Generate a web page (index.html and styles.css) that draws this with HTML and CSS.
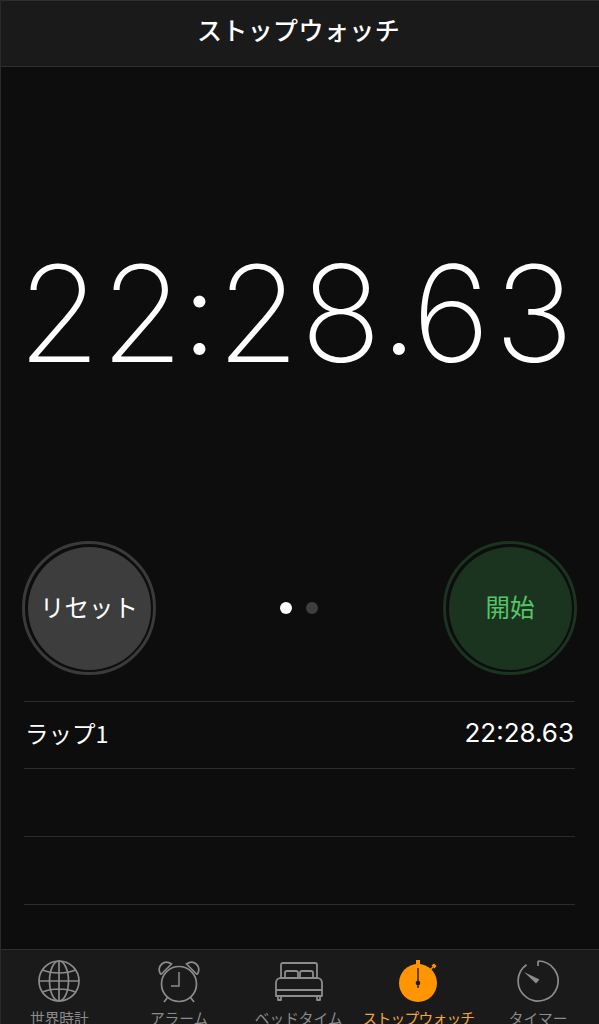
FILE: index.html
```html
<!DOCTYPE html>
<html lang="ja">
<head>
<meta charset="utf-8">
<title>ストップウォッチ</title>
<link rel="stylesheet" href="styles.css">
</head>
<body>
<div class="screen">
  <header class="nav"><h1 class="nav-title">ストップウォッチ</h1></header>
  <main class="main">
    <div class="clock">
      <span class="d">2</span><span class="d">2</span><span class="sep">:</span><span class="d">2</span><span class="d">8</span><span class="sep dot">.</span><span class="d">6</span><span class="d">3</span>
    </div>
    <div class="controls">
      <button class="round reset"><span class="face">リセット</span></button>
      <div class="pager"><i class="pip on"></i><i class="pip"></i></div>
      <button class="round start"><span class="face">開始</span></button>
    </div>
    <ul class="laps">
      <li class="lap"><span class="lap-name">ラップ1</span><span class="lap-time">22:28.63</span></li>
      <li class="lap"></li>
      <li class="lap"></li>
    </ul>
  </main>
  <nav class="tabs">
    <a class="tab">
      <svg class="icon" viewBox="0 0 50 44" fill="none" stroke="currentColor" stroke-width="1.700">
        <circle cx="25" cy="21" r="20"/>
        <ellipse cx="25" cy="21" rx="9.500" ry="20"/>
        <path d="M25 1V41M5 21H45M8.500 10C18 14 32 14 41.500 10M8.500 32C18 28 32 28 41.500 32"/>
      </svg>
      <span class="tab-label">世界時計</span>
    </a>
    <a class="tab">
      <svg class="icon" viewBox="0 0 50 44" fill="none" stroke="currentColor" stroke-width="1.700">
        <circle cx="25" cy="24" r="17.500"/>
        <path d="M25 12V26H17" stroke-width="1.500"/>
        <path d="M13.500 37.500L10 42M36.500 37.500L40 42"/>
        <path d="M6 13C3 6 10 -1 17.500 4L7.500 14C7 14.500 6.300 13.800 6 13Z"/>
        <path d="M44 13C47 6 40 -1 32.500 4L42.500 14C43 14.500 43.700 13.800 44 13Z"/>
      </svg>
      <span class="tab-label">アラーム</span>
    </a>
    <a class="tab">
      <svg class="icon" viewBox="0 0 50 44" fill="none" stroke="currentColor" stroke-width="1.800" stroke-linejoin="round">
        <path d="M7 19V5Q7 3 9 3H41Q43 3 43 5V19"/>
        <path d="M11 17V13Q11 11 13 11H22Q24 11 24 13V17M26 17V13Q26 11 28 11H37Q39 11 39 13V17"/>
        <path d="M2 23Q2 19 6 18H44Q48 19 48 23V36H2Z"/>
        <path d="M2 30H48M4 36V40H7V36M43 36V40H46V36"/>
      </svg>
      <span class="tab-label">ベッドタイム</span>
    </a>
    <a class="tab active">
      <svg class="icon" viewBox="0 0 50 44">
        <circle cx="25" cy="23" r="19" fill="currentColor"/>
        <rect x="23" y="0" width="4" height="6" fill="currentColor"/>
        <path d="M36 11L40 7" stroke="currentColor" stroke-width="1.500"/>
        <path d="M38.500 5.500L41 3.500L43.500 6L41.500 8.500Z" fill="currentColor"/>
        <path d="M25 8V28" stroke="#1a1a1a" stroke-width="1.300"/>
        <circle cx="25" cy="23" r="2.300" fill="#1a1a1a"/>
      </svg>
      <span class="tab-label">ストップウォッチ</span>
    </a>
    <a class="tab">
      <svg class="icon" viewBox="0 0 50 44" fill="none" stroke="currentColor" stroke-width="1.700">
        <path d="M25 1A20 20 0 1 1 13.500 4.700"/>
        <path d="M25 1V6"/>
        <path d="M11 12L26.500 19.500L23 23.500Z" fill="currentColor" stroke="none"/>
      </svg>
      <span class="tab-label">タイマー</span>
    </a>
  </nav>
</div>
</body>
</html>
```
FILE: styles.css
```css
* { box-sizing: border-box; }
html, body { margin: 0; padding: 0; background: #0d0d0d; }
body { font-family: "Noto Sans CJK JP", "Inter", sans-serif; color: #fff; }
.screen { width: 599px; height: 1024px; overflow: hidden; display: flex; flex-direction: column; background: #0d0d0d; border-left: 1px solid #2a2a2a; }
.nav { height: 67px; flex: none; background: #1a1a1a; border-top: 1px solid #2e2e2e; border-bottom: 1px solid #2e2e2e; display: flex; align-items: center; justify-content: center; }
.nav-title { margin: 0 3px 9px 0; font-size: 25px; font-weight: 500; line-height: 36px; letter-spacing: 0.4px; }
.main { flex: 1; display: flex; flex-direction: column; padding: 0 24px 0 23px; min-height: 0; }
.clock { height: 474px; padding-top: 165px; padding-right: 6px; display: flex; font-family: "Inter", sans-serif; font-weight: 200; font-size: 134px; line-height: 162px; justify-content: center; }
.d { width: 83px; text-align: center; flex: none; }
.sep { width: 33px; text-align: center; flex: none; font-size: 113px; font-weight: 300; padding-right: 3px; }
.sep.dot { width: 27px; padding-right: 0; letter-spacing: -6px; }
.controls { height: 160px; padding-bottom: 26px; display: flex; align-items: center; justify-content: space-between; margin-left: -2px; margin-right: -2px; }
.round { width: 134px; height: 134px; border-radius: 50%; padding: 2.500px; background: transparent; border: 3.500px solid; font: inherit; display: block; }
.face { display: flex; width: 100%; height: 100%; border-radius: 50%; align-items: center; justify-content: center; font-size: 24.500px; padding-bottom: 3px; }
.reset { border-color: #3a3a3a; color: #fff; }
.reset .face { background: #3d3d3d; }
.start { border-color: #1b3321; color: #55c566; }
.start .face { background: #1b3420; }
.pager { display: flex; gap: 14px; margin-right: 2px; }
.pip { display: block; width: 12px; height: 12px; border-radius: 50%; background: #3f3f3f; }
.pip.on { background: #fff; }
.laps { list-style: none; margin: 0; padding: 0; border-top: 1px solid #2c2c2c; }
.lap { height: 68px; border-bottom: 1px solid #2c2c2c; display: flex; align-items: center; justify-content: space-between; font-size: 23.500px; padding: 0 1px 5px 1px; }
.lap:first-child { height: 67px; }
.lap-time { font-family: "Inter", sans-serif; font-weight: 400; font-size: 26px; }
.tabs { height: 75px; flex: none; background: #1a1a1a; border-top: 1px solid #2e2e2e; display: grid; grid-template-columns: repeat(5, 119.700px); justify-content: start; padding-top: 10px; margin-left: -1.500px; }
.tab { display: flex; flex-direction: column; align-items: center; color: #8c8c8c; white-space: nowrap; }
.tab.active { color: #ff9500; }
.icon { width: 50px; height: 44px; flex: none; display: block; }
.tab-label { font-size: 14.700px; line-height: 22px; margin-top: 3px; }
.tab.active .tab-label { color: #f3a63f; letter-spacing: -0.700px; }
```
